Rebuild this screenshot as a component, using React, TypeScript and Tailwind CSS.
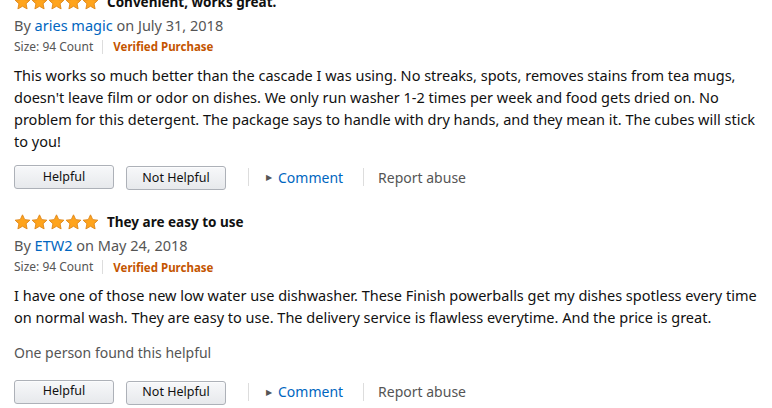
import React from "react";

type Review = {
  title: string;
  author: string;
  date: string;
  body: string[];
  helpful?: string;
  top: string;
};

const reviews: Review[] = [
  {
    title: "Convenient, works great.",
    author: "aries magic",
    date: "July 31, 2018",
    top: "-mt-[8px]",
    body: [
      "This works so much better than the cascade I was using. No streaks, spots, removes stains from tea mugs,",
      "doesn't leave film or odor on dishes. We only run washer 1-2 times per week and food gets dried on. No",
      "problem for this detergent. The package says to handle with dry hands, and they mean it. The cubes will stick",
      "to you!",
    ],
  },
  {
    title: "They are easy to use",
    author: "ETW2",
    date: "May 24, 2018",
    top: "mt-[22px]",
    body: [
      "I have one of those new low water use dishwasher. These Finish powerballs get my dishes spotless every time",
      "on normal wash. They are easy to use. The delivery service is flawless everytime. And the price is great.",
    ],
    helpful: "One person found this helpful",
  },
];

const Star = () => (
  <svg width="17" height="16" viewBox="0 0 24 23">
    <path
      d="M12 1.2l3.2 6.9 7.4.8-5.5 5.1 1.5 7.4L12 17.6l-6.6 3.8 1.5-7.4-5.5-5.1 7.4-.8z"
      fill="#ffa41c"
      stroke="#e08a1e"
      strokeWidth="1.4"
      strokeLinejoin="round"
    />
  </svg>
);

const Btn = ({ label }: { label: string }) => (
  <button className="h-[24px] w-[100px] rounded-[3px] border border-[#adb1b8] bg-gradient-to-b from-[#f7f8fa] to-[#e7e9ec] text-[12.5px] text-[#111] shadow-[0_1px_0_rgba(255,255,255,0.6)_inset]">
    {label}
  </button>
);

const ReviewBlock = ({ r }: { r: Review }) => (
  <div className={r.top}>
    <div className="flex h-[20px] items-center">
      <div className="flex">
        {[0, 1, 2, 3, 4].map((i) => (
          <Star key={i} />
        ))}
      </div>
      <span className="ml-[8px] text-[13.5px] font-bold text-[#111]">{r.title}</span>
    </div>
    <div className="mt-[2px] h-[22px] text-[14.5px] leading-[22px] text-[#555]">
      By <span className="text-[#0066c0]">{r.author}</span> on {r.date}
    </div>
    <div className="flex h-[22px] items-center text-[12px] text-[#555]">
      <span>Size: 94 Count</span>
      <span className="ml-[9px] mr-[10px] h-[14px] w-px bg-[#ddd]" />
      <span className="text-[11.5px] font-bold text-[#c45500]">Verified Purchase</span>
    </div>
    <div className="mt-[6px] text-[14.5px] leading-[22px] text-[#111]">
      {r.body.map((l, i) => (
        <div key={i} className="whitespace-nowrap">
          {l}
        </div>
      ))}
    </div>
    {r.helpful && (
      <div className="mt-[14px] text-[14px] leading-[22px] text-[#555]">{r.helpful}</div>
    )}
    <div className={`flex items-center ${r.helpful ? "mt-[14px]" : "mt-[12px]"}`}>
      <Btn label="Helpful" />
      <div className="ml-[12px]">
        <Btn label="Not Helpful" />
      </div>
      <span className="ml-[22px] h-[18px] w-px bg-[#ddd]" />
      <span className="ml-[17px] text-[8px] text-[#555]">▶</span>
      <span className="ml-[6px] text-[14px] text-[#0066c0]">Comment</span>
      <span className="ml-[20px] h-[18px] w-px bg-[#ddd]" />
      <span className="ml-[14px] text-[14px] text-[#555]">Report abuse</span>
    </div>
  </div>
);

export default function App() {
  return (
    <div
      className="h-[408px] w-[772px] overflow-hidden bg-white pl-[14px]"
      style={{ fontFamily: '"Noto Sans", Arial, sans-serif' }}
    >
      {reviews.map((r, i) => (
        <ReviewBlock key={i} r={r} />
      ))}
    </div>
  );
}
